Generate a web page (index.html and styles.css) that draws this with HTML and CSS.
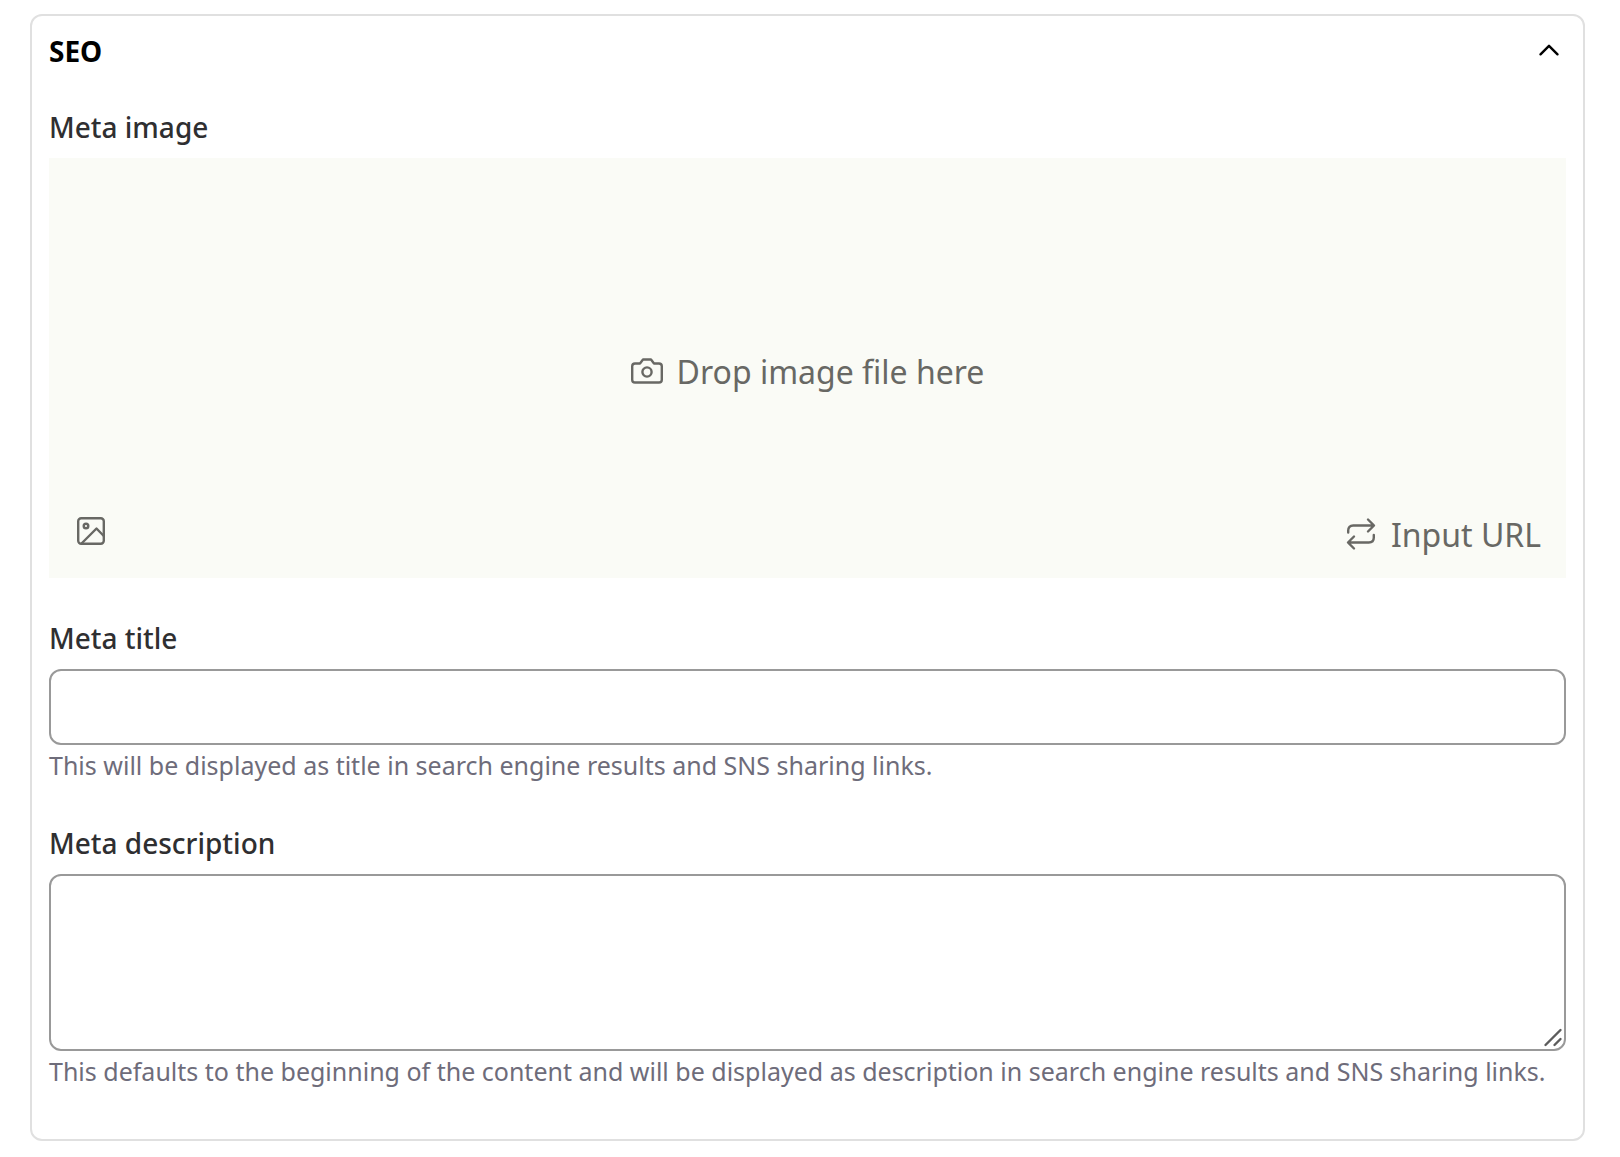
FILE: index.html
```html
<!DOCTYPE html>
<html lang="en">
<head>
<meta charset="utf-8">
<meta name="viewport" content="width=device-width, initial-scale=1">
<title>SEO</title>
<link rel="stylesheet" href="styles.css">
</head>
<body>
<section class="card">
  <h2 class="card-heading">
    <button class="card-toggle" type="button" aria-expanded="true" aria-controls="seo-fields">
      <span>SEO</span>
      <svg class="chevron" viewBox="0 0 20 14" aria-hidden="true"><path d="M1.500 10.300 10 1.800l8.500 8.500"/></svg>
    </button>
  </h2>
  <form class="fields" id="seo-fields">
    <div class="field">
      <label class="label" for="meta-image">Meta image</label>
      <div class="dropzone">
        <label class="drop-hint" for="meta-image">
          <svg class="camera" viewBox="0 0 32 26" aria-hidden="true"><path d="M4 5.500h5l3-4h8l3 4h5q2.800 0 2.800 2.800v13.400q0 2.800-2.800 2.800H4q-2.800 0-2.800-2.800V8.300Q1.200 5.500 4 5.500z"/><circle cx="16" cy="14" r="4.600"/></svg>
          <span>Drop image file here</span>
        </label>
        <input class="file-input" id="meta-image" type="file" accept="image/*">
        <div class="drop-actions">
          <button class="action action-pick" type="button" aria-label="Choose image">
            <svg class="picture" viewBox="0 0 28 28" aria-hidden="true"><rect x="1.200" y="1.200" width="25.600" height="25.600" rx="3"/><circle cx="9" cy="9" r="2.300"/><path d="M4.500 26.500 19.500 11.500l7.300 7.500"/></svg>
          </button>
          <button class="action" type="button">
            <svg class="swap" viewBox="0 0 28 32" aria-hidden="true"><path d="M1.200 14.500v-2q0-5 5-5H26.500M21 1.500l6 6-6 6M26.800 17v2.500q0 5-5 5H1.500M7 18.500l-6 6 6 6"/></svg>
            <span>Input URL</span>
          </button>
        </div>
      </div>
    </div>
    <div class="field">
      <label class="label" for="meta-title">Meta title</label>
      <input class="control" id="meta-title" type="text" aria-describedby="title-help">
      <p class="help" id="title-help">This will be displayed as title in search engine results and SNS sharing links.</p>
    </div>
    <div class="field">
      <label class="label" for="meta-description">Meta description</label>
      <div class="textarea-wrap">
        <textarea class="control control-multi" id="meta-description" aria-describedby="description-help"></textarea>
        <svg class="grip" viewBox="0 0 18 18" aria-hidden="true"><path d="M1.500 16l15-15M10.500 16l6-6"/></svg>
      </div>
      <p class="help" id="description-help">This defaults to the beginning of the content and will be displayed as description in search engine results and SNS sharing links.</p>
    </div>
  </form>
</section>
</body>
</html>
```
FILE: styles.css
```css
*, *::before, *::after { box-sizing: border-box; }

body {
  margin: 0;
  padding: 14px 35px 16px 30px;
  background: #fff;
  color: #2f2f31;
  font-family: "Segoe UI", "Noto Sans", "Open Sans", sans-serif;
}

button {
  padding: 0;
  border: 0;
  background: none;
  color: inherit;
  font: inherit;
  cursor: pointer;
}

svg {
  flex: none;
  overflow: visible;
  fill: none;
  stroke: currentColor;
  stroke-width: 2.4;
  stroke-linecap: round;
  stroke-linejoin: round;
}

.card {
  padding: 0 17px 50px;
  border: 2px solid #e0e0e0;
  border-radius: 12px;
}

.card-heading { margin: 0 0 21px; }

.card-toggle {
  display: flex;
  align-items: center;
  justify-content: space-between;
  width: 100%;
  height: 70px;
  padding-right: 7px;
  color: #000;
  font-size: 28px;
  font-weight: 700;
}

.chevron { width: 20px; height: 14px; }

.fields {
  display: flex;
  flex-direction: column;
  gap: 40px;
}

.field {
  display: flex;
  flex-direction: column;
}

.label {
  margin-bottom: 11px;
  font-size: 28px;
  font-weight: 500;
  line-height: 40px;
}

.dropzone {
  display: grid;
  grid-template-rows: 1fr auto 1fr;
  min-height: 420px;
  padding: 29px 25px 21px;
  background: #fafbf6;
  color: #686864;
  font-size: 32px;
  line-height: 44px;
}

.drop-hint {
  grid-row: 2;
  display: flex;
  align-items: center;
  justify-content: center;
  gap: 14px;
}

.camera {
  width: 32px;
  height: 26px;
  margin-bottom: 3px;
}

.file-input {
  position: absolute;
  width: 1px;
  height: 1px;
  opacity: 0;
}

.drop-actions {
  grid-row: 3;
  display: flex;
  align-items: flex-end;
  justify-content: space-between;
}

.action {
  display: flex;
  align-items: center;
  gap: 16px;
  min-height: 44px;
}

.action-pick { padding: 0 3px 8px; }

.picture { width: 28px; height: 28px; }

.swap {
  width: 28px;
  height: 32px;
  margin-bottom: 3px;
}

.control {
  width: 100%;
  height: 76px;
  padding: 16px;
  border: 2px solid #999;
  border-radius: 12px;
  background: #fff;
  color: inherit;
  font: inherit;
  font-size: 28px;
}

.textarea-wrap {
  position: relative;
  display: flex;
}

.control-multi {
  height: 177px;
  resize: none;
}

.grip {
  position: absolute;
  right: 4px;
  bottom: 4px;
  width: 18px;
  height: 18px;
  stroke: #5c5c5c;
  pointer-events: none;
}

.help {
  margin: 2px 0 0;
  color: #6e6c7a;
  font-size: 25px;
  line-height: 36px;
}
```
